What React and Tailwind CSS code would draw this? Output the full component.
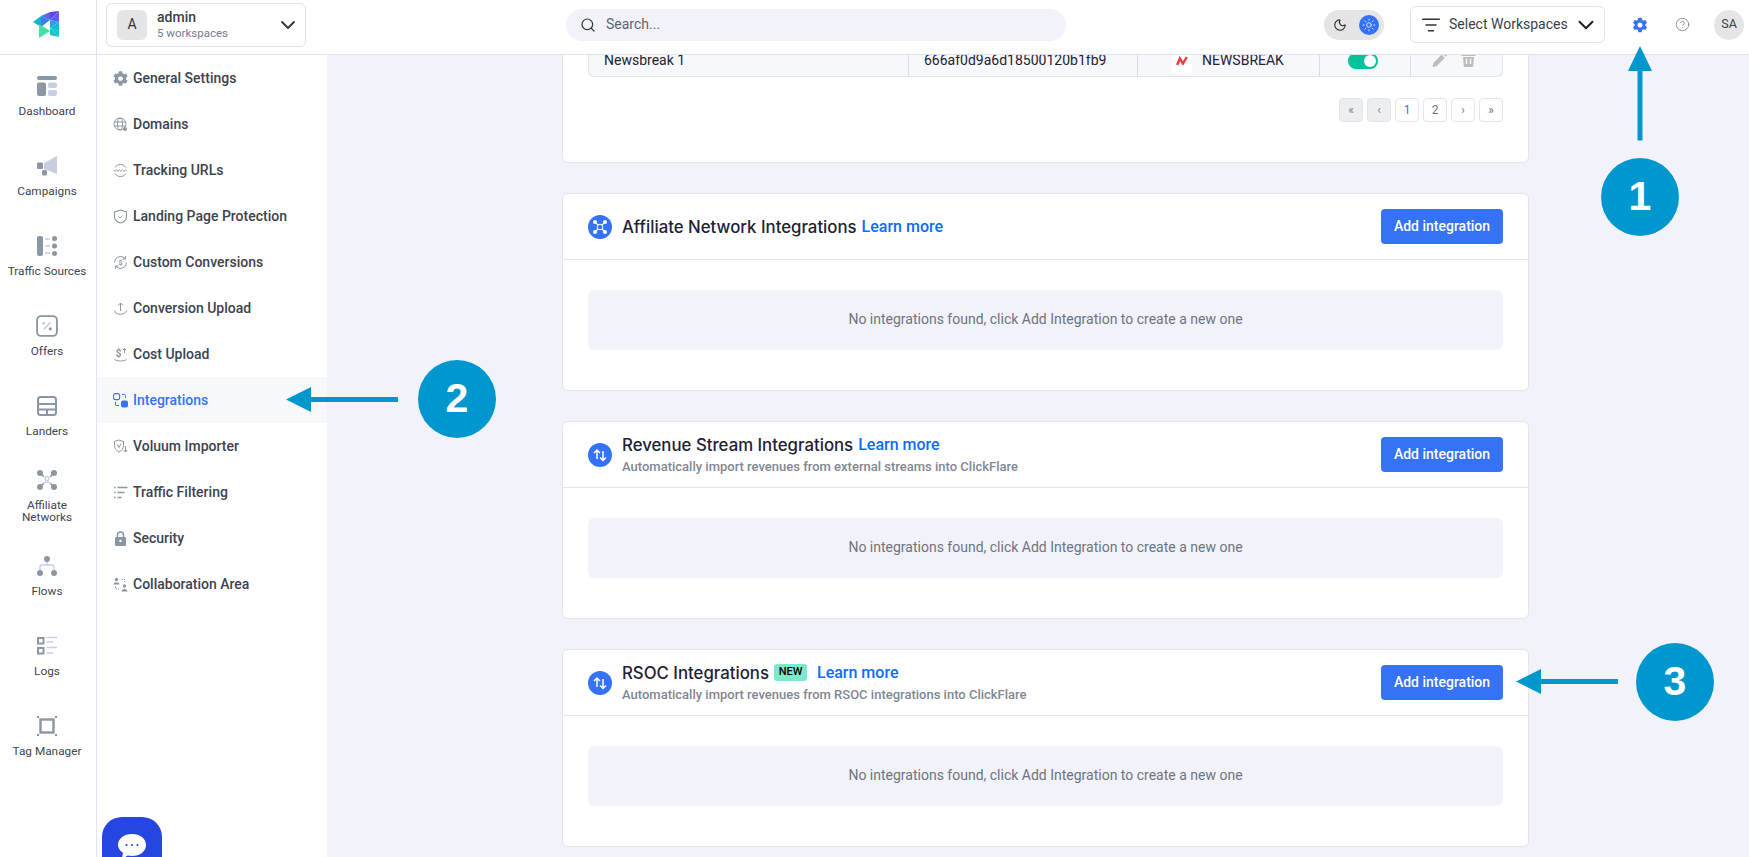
import React from "react";
import { ChevronDown, Search, ListFilter, Moon, Sun, CircleHelp } from "lucide-react";
import { FaCog } from "react-icons/fa";
import { IoSettingsSharp } from "react-icons/io5";

const G = "#8b97a3";
const L = "#c8cde2";

const Svg = ({ s = 20, children, className = "" }) => (
  <svg width={s} height={s} viewBox="0 0 20 20" fill="none" className={className}>{children}</svg>
);

const navIcons = {
  dashboard: (
    <Svg>
      <rect x="0" y="0" width="20" height="4" rx="2" fill={G} />
      <rect x="0" y="6.5" width="9" height="13.5" rx="2" fill={G} />
      <rect x="11" y="6.5" width="9" height="5.5" rx="2" fill={L} />
      <rect x="11" y="14" width="9" height="6" rx="2" fill={L} />
    </Svg>
  ),
  campaigns: (
    <Svg>
      <path d="M7 7 L20 0 V18 L7 13 Z" fill={L} />
      <rect x="0" y="6.5" width="6" height="6.500" rx="1" fill={G} />
      <rect x="5" y="14" width="5" height="5.5" rx="1.5" fill={G} />
    </Svg>
  ),
  traffic: (
    <Svg>
      <rect x="0" y="0" width="6" height="20" rx="2" fill={G} />
      <circle cx="17.5" cy="2.5" r="2.5" fill={G} />
      <circle cx="17.5" cy="10" r="2.5" fill={G} />
      <circle cx="17.5" cy="17.5" r="2.5" fill={G} />
      <path d="M8 3h5M8 10h5M8 17h5" stroke={L} strokeWidth="1.5" />
    </Svg>
  ),
  offers: (
    <Svg s={22}>
      <rect x="1" y="1" width="18" height="18" rx="3.5" stroke={G} strokeWidth="1.7" />
      <path d="M12.8 7 L7.2 13" stroke={L} strokeWidth="1.6" />
      <circle cx="7" cy="7.5" r="1.4" fill={L} />
      <circle cx="13" cy="12.6" r="1.4" fill={G} />
    </Svg>
  ),
  landers: (
    <Svg>
      <rect x="1" y="1" width="18" height="18" rx="2.500" stroke={G} strokeWidth="2" />
      <path d="M1 8h18M1 13.5h18M10 13.5V19" stroke={G} strokeWidth="2" />
    </Svg>
  ),
  affiliate: (
    <Svg>
      <path d="M3 3L17 17M17 3L3 17" stroke={G} strokeWidth="1.6" />
      <circle cx="3" cy="3" r="3" fill={G} />
      <circle cx="17" cy="3" r="3" fill={G} />
      <circle cx="3" cy="17" r="3" fill={G} />
      <circle cx="17" cy="17" r="3" fill={G} />
      <circle cx="10" cy="10" r="4.6" fill="#fff" />
      <circle cx="10" cy="8.5" r="2" stroke={L} strokeWidth="1.3" />
      <path d="M6.8 13.5c.5-2 5.9-2 6.4 0" stroke={L} strokeWidth="1.3" />
    </Svg>
  ),
  flows: (
    <Svg>
      <path d="M10 4v5M3 16v-5.5a1.5 1.5 0 0 1 1.5-1.5h11a1.5 1.5 0 0 1 1.5 1.5V16" stroke={L} strokeWidth="1.4" />
      <circle cx="10" cy="3" r="3" fill={G} />
      <circle cx="3" cy="17" r="3" fill={G} />
      <circle cx="17" cy="17" r="3" fill={G} />
    </Svg>
  ),
  logs: (
    <Svg>
      <rect x="1" y="2" width="5.500" height="5.500" stroke={G} strokeWidth="2" />
      <rect x="1" y="12" width="5.500" height="5.500" stroke={G} strokeWidth="2" />
      <path d="M9.500 1.500H20M9.500 6H16M9.500 11.500H20M9.500 17H16" stroke={L} strokeWidth="1.500" />
    </Svg>
  ),
  tag: (
    <Svg>
      <rect x="3.5" y="3.5" width="13" height="13" stroke={G} strokeWidth="2.400" />
      <path d="M0 0h2v2H0zM18 0h2v2h-2zM0 18h2v2H0zM18 18h2v2h-2z" fill={G} />
    </Svg>
  ),
};

const nav = [
  { k: "dashboard", l: ["Dashboard"], h: "h-[80px]" },
  { k: "campaigns", l: ["Campaigns"], h: "h-[80px]" },
  { k: "traffic", l: ["Traffic Sources"], h: "h-[80px]" },
  { k: "offers", l: ["Offers"], h: "h-[80px]" },
  { k: "landers", l: ["Landers"], h: "h-[74px]" },
  { k: "affiliate", l: ["Affiliate", "Networks"], h: "h-[86px]" },
  { k: "flows", l: ["Flows"], h: "h-[80px]" },
  { k: "logs", l: ["Logs"], h: "h-[80px]" },
  { k: "tag", l: ["Tag Manager"], h: "h-[80px]" },
];

const S = ({ children }) => (
  <svg width="15" height="15" viewBox="0 0 15 15" fill="none" stroke={G} strokeWidth="1" className="shrink-0">{children}</svg>
);

const subIcons = {
  gear: <FaCog size={15} color={G} className="shrink-0" />,
  globe: (
    <S>
      <circle cx="7" cy="7" r="6" />
      <ellipse cx="7" cy="7" rx="2.600" ry="6" />
      <path d="M1 5h12M1 9h12" />
      <circle cx="12" cy="12" r="2" fill={G} stroke="none" />
    </S>
  ),
  www: (
    <S>
      <path d="M2 4.500a6.500 6.500 0 0 1 11 0M2 10.500a6.500 6.500 0 0 0 11 0" />
      <path d="M.5 6.500l1.500 2 1.500-2 1.500 2 1.500-2 1.500 2 1.500-2 1.500 2 1.500-2 1.500 2" strokeWidth=".8" />
    </S>
  ),
  shield: (
    <S>
      <path d="M7.500 1L13.500 3v5c0 3-2.500 5-6 6-3.500-1-6-3-6-6V3z" strokeWidth="1.100" />
      <path d="M5.500 7.500l1.500 1.500 2.500-2.500" />
    </S>
  ),
  refresh: (
    <S>
      <path d="M1.500 7.500a6 6 0 0 1 10.500-4M13.500 7.500a6 6 0 0 1-10.500 4" />
      <path d="M12.500 1v3h-3M2.500 14v-3h3" />
      <text x="7.500" y="10" textAnchor="middle" fontSize="7" fill={G} stroke="none" fontWeight="700">$</text>
    </S>
  ),
  upload: (
    <S>
      <path d="M7.500 10V2M5 4.500l2.500-2.500 2.500 2.500M1.500 9.500c.5 5 11.500 5 12 0" />
    </S>
  ),
  cost: (
    <S>
      <text x="5.500" y="10" textAnchor="middle" fontSize="10" fill={G} stroke="none" fontWeight="700">$</text>
      <path d="M11.500 6V1.500M10 3l1.500-1.500L13 3M1.500 12.500c3 2 9 2 12 0" />
    </S>
  ),
  integrations: (
    <svg width="15" height="15" viewBox="0 0 15 15" fill="none" className="shrink-0">
      <rect x=".6" y=".6" width="6" height="6" rx="1.500" stroke="#3572f6" strokeWidth="1.100" />
      <rect x="8" y="7.500" width="7" height="7" rx="2" fill="#3572f6" />
      <path d="M9 1.500h2.500a1 1 0 0 1 1 1V5M2.500 9v2.500a1 1 0 0 0 1 1H6" stroke="#3572f6" strokeWidth="1" />
    </svg>
  ),
  voluum: (
    <S>
      <path d="M6 1l4.500 1.500v4c0 3-2 5.500-4.500 6.500C3.500 12 1.500 9.500 1.500 6.500v-4z" />
      <path d="M4 5l2 3.500L8 5" />
      <path d="M12.500 7v6M10.500 11l2 2 2-2" />
    </S>
  ),
  filter: (
    <S>
      <path d="M4.500 2.500h10M4.500 7.500h7M4.500 12.500h4" strokeWidth="1.300" />
      <path d="M1 2.500h1.500M1 7.500h1.500M1 12.500h1.500" strokeWidth="1.300" />
    </S>
  ),
  lock: (
    <svg width="15" height="15" viewBox="0 0 15 15" className="shrink-0" fill="none">
      <rect x="2" y="6" width="11" height="9" rx="1" fill={G} />
      <path d="M4.500 6V4a3 3 0 0 1 6 0v2" stroke={G} strokeWidth="1.500" />
      <circle cx="7.500" cy="10" r="1.200" fill="#fff" />
    </svg>
  ),
  collab: (
    <svg width="15" height="15" viewBox="0 0 15 15" className="shrink-0" fill={G}>
      <circle cx="3.500" cy="2.500" r="1.700" />
      <path d="M.5 7.500c0-3 6-3 6 0z" />
      <circle cx="11.500" cy="9" r="1.700" />
      <path d="M8.500 14.500c0-3.500 6-3.500 6 0z" />
      <path d="M8.500 2.500h3.500v2.500M2.500 9.500v2.500h3.500" fill="none" stroke={G} strokeWidth="1" strokeDasharray="1.500 1" />
    </svg>
  ),
};

const sub = [
  ["gear", "General Settings"],
  ["globe", "Domains"],
  ["www", "Tracking URLs"],
  ["shield", "Landing Page Protection"],
  ["refresh", "Custom Conversions"],
  ["upload", "Conversion Upload"],
  ["cost", "Cost Upload"],
  ["integrations", "Integrations"],
  ["voluum", "Voluum Importer"],
  ["filter", "Traffic Filtering"],
  ["lock", "Security"],
  ["collab", "Collaboration Area"],
];

const Logo = () => (
  <svg width="27" height="27" viewBox="0 0 27 27">
    <path d="M0 11 L8 5 V16 Z" fill="#12b5c9" />
    <path d="M8 5 L17 9 L8 16 Z" fill="#3d7de8" />
    <path d="M8 5 L17 1 V9 Z" fill="#4f6cf0" />
    <path d="M17 1 L26 0 L17 9 Z" fill="#6a3ff0" />
    <path d="M17 9 L26 0 V11 Z" fill="#5e5cf2" />
    <path d="M17 9 L26 11 L17 17 Z" fill="#2e9cea" />
    <path d="M26 11 V20 L17 17 Z" fill="#14b8d8" />
    <path d="M17 17 L26 20 V26 Z" fill="#0cc6d4" />
    <path d="M17 17 L26 26 L17 24 Z" fill="#10c8c8" />
    <path d="M6 13 L17 20 L6 27 Z" fill="#3fe2a2" />
  </svg>
);

const NetIcon = () => (
  <svg width="24" height="24" viewBox="0 0 24 24" fill="none">
    <circle cx="12" cy="12" r="12" fill="#3572f6" />
    <path d="M7.500 7.500L16.500 16.500M16.500 7.500L7.500 16.500" stroke="#fff" strokeWidth="1.200" />
    <circle cx="7" cy="7" r="2" fill="#fff" />
    <circle cx="17" cy="7" r="2" fill="#fff" />
    <circle cx="7" cy="17" r="2" fill="#fff" />
    <circle cx="17" cy="17" r="2" fill="#fff" />
    <circle cx="12" cy="12" r="2.800" fill="#3572f6" stroke="#fff" strokeWidth="1" />
  </svg>
);

const SwapIcon = () => (
  <svg width="24" height="24" viewBox="0 0 24 24" fill="none">
    <circle cx="12" cy="12" r="12" fill="#3572f6" />
    <path d="M9 16V7M6 10l3-3 3 3M15 8v9.500M12 14.500l3 3 3-3" stroke="#fff" strokeWidth="1.500" />
  </svg>
);

const Card = ({ icon, title, badge, subtitle }) => (
  <section className="h-[198px] shrink-0 rounded-md border border-[#e3e5ec] bg-white">
    <div className="flex h-[66px] items-center justify-between border-b border-[#e3e5ec] px-[25px]">
      <div className="flex items-center gap-[10px]">
        {icon}
        <div className="flex flex-col">
          <div className="flex items-center">
            <span className="font-[Inter] text-[16.800px] font-medium leading-[24px] text-[#1e2235]">{title}</span>
            {badge && (
              <span className="ml-[5px] flex h-[17px] w-[33px] items-center justify-center rounded-[3px] bg-[#7de8cb] text-[11px] font-medium text-black">NEW</span>
            )}
            <a className={`text-[16px] font-medium text-[#0a6cff] ${badge ? "ml-[10px]" : "ml-[5px]"}`}>Learn more</a>
          </div>
          {subtitle && <p className="text-[13px] font-medium leading-[20px] text-[#828792]">{subtitle}</p>}
        </div>
      </div>
      <button className="h-[35px] w-[122px] rounded-[4px] bg-[#3572f6] text-[14px] font-medium text-white">Add integration</button>
    </div>
    <div className="px-[25px] pt-[30px]">
      <div className="flex h-[60px] items-center justify-center rounded-md bg-[#f1f2fa] pb-[2px] text-[14px] text-[#6f7480]">
        No integrations found, click Add Integration to create a new one
      </div>
    </div>
  </section>
);

const Page = ({ children, disabled, active }) => (
  <button className={`flex h-[24px] w-[24px] items-center justify-center rounded-[4px] border border-[#e3e5ec] text-[12px] ${disabled ? "bg-[#eceef1] text-[#7c828c]" : "bg-white text-[#6f7480]"} ${active ? "text-[#3572f6]" : ""}`}>
    {children}
  </button>
);

const Callout = ({ n, className }) => (
  <div className={`absolute flex h-[78px] w-[78px] items-center justify-center rounded-full bg-[#0097ce] font-['Liberation_Sans'] text-[41px] font-bold text-white ${className}`}>{n}</div>
);

export default function App() {
  return (
    <div className="relative flex h-[857px] w-full flex-col overflow-hidden bg-[#f1f2fa] font-[Roboto,sans-serif]">
      <header className="relative z-10 flex h-[55px] shrink-0 items-center border-b border-[#dfe2ea] bg-white pb-[5px]">
        <div className="-mb-[5px] flex h-[54px] w-[97px] items-center justify-center border-r border-[#dfe2ea] pb-[5px] pr-[3px]">
          <Logo />
        </div>
        <div className="ml-[9px] flex h-[44px] w-[200px] items-center rounded-md border border-[#dfe2ea] pl-[10px] pr-[5px]">
          <div className="flex h-[30px] w-[30px] items-center justify-center rounded-md bg-[#e5e5e5] text-[14px] text-[#333]">A</div>
          <div className="ml-[10px] flex flex-col">
            <span className="text-[14px] font-medium leading-[17px] text-[#3a3f4a]">admin</span>
            <span className="text-[11.500px] leading-[14px] text-[#767c88]">5 workspaces</span>
          </div>
          <ChevronDown size={24} strokeWidth={1.800} className="ml-auto text-[#333]" />
        </div>
        <div className="ml-[260px] flex h-[32px] w-[500px] items-center rounded-full bg-[#f1f2fa] pl-[14px] text-[14px] text-[#5f6570]">
          <Search size={16} strokeWidth={1.800} className="text-[#333]" />
          <span className="ml-[10px]">Search...</span>
        </div>
        <div className="ml-auto flex items-center pr-[5px]">
          <div className="flex h-[30px] w-[60px] items-center justify-between rounded-full bg-[#e5e5e5] pl-[9px] pr-[5px]">
            <Moon size={14} strokeWidth={1.800} className="text-[#222]" />
            <div className="flex h-[20px] w-[20px] items-center justify-center rounded-full bg-[#3572f6]">
              <Sun size={14} strokeWidth={1.300} className="text-white" />
            </div>
          </div>
          <div className="ml-[26px] flex h-[37px] w-[195px] items-center rounded-md border border-[#dfe2ea] pl-[10px] pr-[5px] text-[14px] text-[#3a3f4a]">
            <ListFilter size={20} strokeWidth={1.800} className="text-[#333]" />
            <span className="ml-[8px]">Select Workspaces</span>
            <ChevronDown size={26} strokeWidth={1.900} className="ml-auto text-[#222]" />
          </div>
          <IoSettingsSharp size={16} color="#3572f6" className="ml-[27px]" />
          <CircleHelp size={15} strokeWidth={1.400} className="ml-[27px] text-[#7c8794]" />
          <div className="ml-[24px] flex h-[30px] w-[30px] items-center justify-center rounded-full bg-[#e5e5e5] text-[12.500px] font-normal text-[#3a3f4a]">SA</div>
        </div>
      </header>

      <div className="flex min-h-0 flex-1">
        <nav className="w-[97px] shrink-0 border-r border-[#e0e4f0] bg-white pr-[2px] pt-[20px]">
          {nav.map((n) => (
            <div key={n.k} className={`flex flex-col items-center ${n.h}`}>
              <div className="flex h-[22px] items-center justify-center">{navIcons[n.k]}</div>
              <div className="mt-[8px] text-center text-[11.800px] leading-[12px] text-[#3f4550]">
                {n.l.map((t) => (
                  <div key={t}>{t}</div>
                ))}
              </div>
            </div>
          ))}
        </nav>

        <aside className="relative w-[230px] shrink-0 bg-white">
          {sub.map(([k, t]) => (
            <div key={t} className={`flex h-[46px] items-center gap-[5px] pl-[16px] text-[14px] font-medium ${k === "integrations" ? "bg-[#f7f8fc] text-[#3572f6]" : "text-[#3d4350]"}`}>
              {subIcons[k]}
              <span>{t}</span>
            </div>
          ))}
          <div className="absolute bottom-[-20px] left-[5px] flex h-[60px] w-[60px] justify-center rounded-[20px] bg-[#2546e0] pt-[17px]">
            <svg width="28" height="26" viewBox="0 0 28 26">
              <path d="M14 0c8 0 14 4.500 14 11s-6 11-14 11c-1.500 0-3-.2-4.300-.5L4 25l.9-6.200C2 16.800 0 14 0 11 0 4.500 6 0 14 0z" fill="#fff" />
              <circle cx="8.500" cy="11" r="1.100" fill="#2546e0" />
              <circle cx="14" cy="11" r="1.100" fill="#2546e0" />
              <circle cx="19.500" cy="11" r="1.100" fill="#2546e0" />
            </svg>
          </div>
        </aside>

        <main className="flex min-w-0 flex-1 flex-col gap-[30px] overflow-hidden pl-[235px] pr-[220px]">
          <section className="-mt-[30px] h-[138px] shrink-0 rounded-md border border-[#e3e5ec] bg-white px-[25px] pt-[19px]">
            <div className="grid h-[32px] grid-cols-[320px_229px_182px_91px_1fr] rounded-b-md border border-t-0 border-[#dfe2ea] bg-[#f7f8fc] text-[14px] text-[#1e2235]">
              <div className="flex items-center border-r border-[#d9dce8] pl-[15px]">Newsbreak 1</div>
              <div className="flex items-center border-r border-[#d9dce8] pl-[15px]">666af0d9a6d18500120b1fb9</div>
              <div className="flex items-center border-r border-[#d9dce8] pl-[34px]">
                <div className="flex h-[24px] w-[20px] items-center justify-center bg-white">
                  <svg width="12" height="10" viewBox="0 0 12 10" fill="none">
                    <path d="M1.200 9L3.800 2.500L7 7.500L10.800 1" stroke="#ea3a3e" strokeWidth="2.400" />
                  </svg>
                </div>
                <span className="ml-[10px]">NEWSBREAK</span>
              </div>
              <div className="flex items-start justify-center border-r border-[#d9dce8] pr-[4px] pt-[8px]">
                <div className="flex h-[16px] w-[30px] items-center justify-end rounded-full bg-[#00c29b] pr-[2px]">
                  <div className="h-[12px] w-[12px] rounded-full bg-white" />
                </div>
              </div>
              <div className="flex items-start justify-center gap-[14px] pr-[6px] pt-[7px]">
                <svg width="15" height="15" viewBox="0 0 14 15" fill="#bcbcbc">
                  <path d="M0 15l.8-4L9 2.800l3.200 3.200L4 14.200zM10 1.800L11.500.3l3 3L13 4.800z" />
                </svg>
                <svg width="15" height="15" viewBox="0 0 14 15" fill="#bcbcbc">
                  <path d="M0 2h14v2H0zM1.500 5h11l-.8 9a1 1 0 0 1-1 1H3.300a1 1 0 0 1-1-1z" />
                  <path d="M5 6.500V12M9 6.500V12" stroke="#f7f8fc" strokeWidth="1.500" />
                </svg>
              </div>
            </div>
            <div className="mt-[21px] flex justify-end gap-[4px]">
              <Page disabled>«</Page>
              <Page disabled>‹</Page>
              <Page active>1</Page>
              <Page>2</Page>
              <Page>›</Page>
              <Page>»</Page>
            </div>
          </section>

          <Card icon={<NetIcon />} title="Affiliate Network Integrations" />
          <Card icon={<SwapIcon />} title="Revenue Stream Integrations" subtitle="Automatically import revenues from external streams into ClickFlare" />
          <Card icon={<SwapIcon />} title="RSOC Integrations" badge subtitle="Automatically import revenues from RSOC integrations into ClickFlare" />
        </main>
      </div>

      {/* annotations */}
      <svg className="absolute left-[1627px] top-[46px] z-20" width="26" height="95" viewBox="0 0 26 95">
        <path d="M13 0L25 25H15.500V94.500H10.500V25H1Z" fill="#0097ce" />
      </svg>
      <Callout n="1" className="left-[1601px] top-[158px] z-20" />
      <svg className="absolute left-[286px] top-[387px] z-20" width="113" height="25" viewBox="0 0 113 25">
        <path d="M0 12.500L25 0V10H112V15H25V25Z" fill="#0097ce" />
      </svg>
      <Callout n="2" className="left-[418px] top-[360px] z-20" />
      <svg className="absolute left-[1516px] top-[669px] z-20" width="103" height="25" viewBox="0 0 103 25">
        <path d="M0 12.500L25 0V10H102V15H25V25Z" fill="#0097ce" />
      </svg>
      <Callout n="3" className="left-[1636px] top-[643px] z-20" />
    </div>
  );
}
